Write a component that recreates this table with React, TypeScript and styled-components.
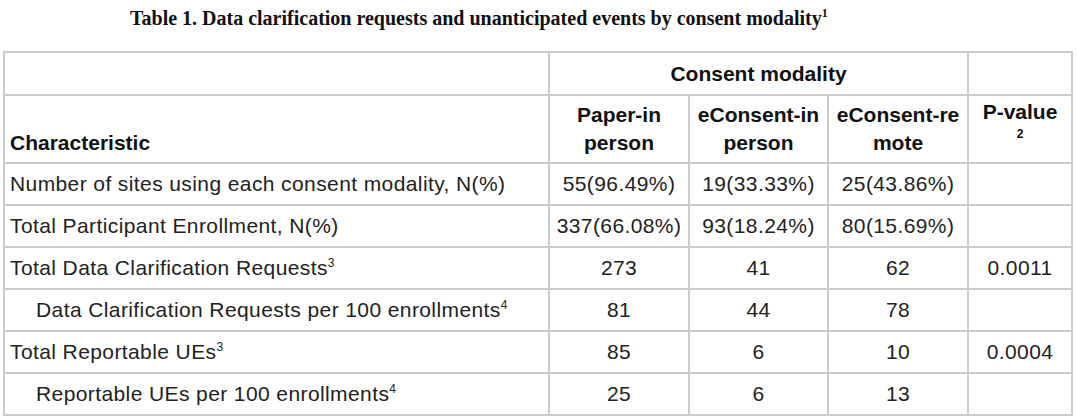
import React from 'react';
import styled, { createGlobalStyle } from 'styled-components';

const GlobalStyle = createGlobalStyle`
  html, body {
    margin: 0;
    padding: 0;
    background: #fff;
  }
`;

type Row = {
  label: string;
  note?: string;
  indent?: boolean;
  values: string[];
  pValue?: string;
};

const rows: Row[] = [
  {
    label: 'Number of sites using each consent modality, N(%)',
    values: ['55(96.49%)', '19(33.33%)', '25(43.86%)'],
  },
  {
    label: 'Total Participant Enrollment, N(%)',
    values: ['337(66.08%)', '93(18.24%)', '80(15.69%)'],
  },
  {
    label: 'Total Data Clarification Requests',
    note: '3',
    values: ['273', '41', '62'],
    pValue: '0.0011',
  },
  {
    label: 'Data Clarification Requests per 100 enrollments',
    note: '4',
    indent: true,
    values: ['81', '44', '78'],
  },
  {
    label: 'Total Reportable UEs',
    note: '3',
    values: ['85', '6', '10'],
    pValue: '0.0004',
  },
  {
    label: 'Reportable UEs per 100 enrollments',
    note: '4',
    indent: true,
    values: ['25', '6', '13'],
  },
];

export default function App() {
  return (
    <Page>
      <GlobalStyle />
      <Title>
        Table 1. Data clarification requests and unanticipated events by consent modality
        <TitleSup>1</TitleSup>
      </Title>
      <Table>
        <colgroup>
          <col style={{ width: 545 }} />
          <col style={{ width: 140 }} />
          <col style={{ width: 139 }} />
          <col style={{ width: 140 }} />
          <col style={{ width: 104 }} />
        </colgroup>
        <thead>
          <tr>
            <GroupCell />
            <GroupCell colSpan={3}>Consent modality</GroupCell>
            <GroupCell />
          </tr>
          <tr>
            <HeadCell $align="left" $valign="bottom">Characteristic</HeadCell>
            <HeadCell>Paper-in person</HeadCell>
            <HeadCell>eConsent-in person</HeadCell>
            <HeadCell>eConsent-re mote</HeadCell>
            <HeadCell $valign="top">
              P-value
              <HeadNote>2</HeadNote>
            </HeadCell>
          </tr>
        </thead>
        <tbody>
          {rows.map((row) => (
            <tr key={row.label}>
              <LabelCell $indent={row.indent}>
                {row.label}
                {row.note && <Note>{row.note}</Note>}
              </LabelCell>
              {row.values.map((value, index) => (
                <ValueCell key={index}>{value}</ValueCell>
              ))}
              <ValueCell>{row.pValue}</ValueCell>
            </tr>
          ))}
        </tbody>
      </Table>
    </Page>
  );
}

const Page = styled.div`
  display: flex;
  flex-direction: column;
  width: 1077px;
`;

const Title = styled.div`
  height: 51px;
  box-sizing: border-box;
  padding: 7px 0 0 130px;
  font-family: 'Liberation Serif', 'Times New Roman', serif;
  font-weight: bold;
  font-size: 20px;
  line-height: 22px;
  color: #111;
`;

const TitleSup = styled.sup`
  font-size: 12px;
  line-height: 0;
`;

const Table = styled.table`
  margin-left: 3px;
  width: 1068px;
  table-layout: fixed;
  border-collapse: collapse;
  border: 2px solid #000;
  font-family: 'Liberation Sans', Arial, sans-serif;
  font-size: 21px;
  color: #222;
`;

const Cell = styled.td`
  border: 2px solid #cccccc;
  padding: 0 5px;
  line-height: 28px;
  white-space: nowrap;
  letter-spacing: 0.4px;
`;

const GroupCell = styled(Cell).attrs({ as: 'th' })`
  height: 41px;
  text-align: center;
  font-weight: bold;
  letter-spacing: 0;
  color: #111;
`;

const HeadCell = styled(Cell).attrs({ as: 'th' })<{ $align?: string; $valign?: string }>`
  height: 68px;
  box-sizing: border-box;
  padding-top: ${(p) => (p.$valign === 'top' ? '2px' : '0')};
  padding-bottom: ${(p) => (p.$valign === 'bottom' ? '5px' : '0')};
  text-align: ${(p) => p.$align || 'center'};
  vertical-align: ${(p) => p.$valign || 'middle'};
  white-space: normal;
  font-weight: bold;
  letter-spacing: 0;
  color: #111;
`;

const HeadNote = styled.span`
  display: block;
  font-size: 12px;
  line-height: 16px;
`;

const LabelCell = styled(Cell)<{ $indent?: boolean }>`
  height: 40px;
  padding-left: ${(p) => (p.$indent ? '31px' : '5px')};
  text-align: left;
`;

const ValueCell = styled(Cell)`
  height: 40px;
  text-align: center;
`;

const Note = styled.sup`
  font-size: 12px;
  line-height: 0;
  letter-spacing: 0;
`;
